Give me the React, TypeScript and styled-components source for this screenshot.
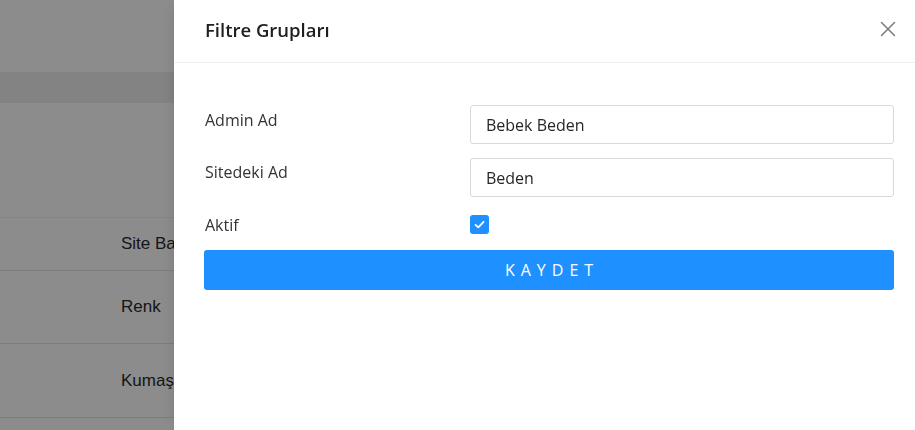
import React from "react";
import styled, { createGlobalStyle } from "styled-components";

const Global = createGlobalStyle`
  html, body { margin: 0; padding: 0; }
  body { width: 915px; height: 430px; overflow: hidden; background: #fff; font-family: "Liberation Sans", Arial, sans-serif; }
  * { box-sizing: border-box; }
`;

const Page = styled.div`
  width: 915px;
  height: 430px;
  display: flex;
  flex-direction: column;
  background: #fff;
`;

const PageHeader = styled.div`
  height: 72px;
  flex: none;
`;

const TableHead = styled.div`
  height: 31px;
  flex: none;
  background: #eeeeee;
`;

const Row = styled.div<{ $h: number; $line?: string }>`
  height: ${(p) => p.$h}px;
  flex: none;
  display: flex;
  align-items: center;
  padding-left: 121px;
  border-bottom: 1px solid ${(p) => p.$line ?? "#e3e3e3"};
  font-size: 17px;
  color: #2a2a2a;
`;

const Overlay = styled.div`
  position: fixed;
  inset: 0;
  background: rgba(0, 0, 0, 0.45);
`;

const Drawer = styled.div`
  position: fixed;
  top: 0;
  right: 0;
  bottom: 0;
  width: 741px;
  background: #fff;
  box-shadow: -6px 0 16px -6px rgba(0, 0, 0, 0.12);
  display: flex;
  flex-direction: column;
  font-family: "Open Sans", "Noto Sans", sans-serif;
`;

const DrawerHeader = styled.div`
  height: 63px;
  flex: none;
  display: flex;
  align-items: center;
  justify-content: space-between;
  padding: 0 19px 0 31px;
  border-bottom: 1px solid #efefef;
`;

const Title = styled.div`
  font-size: 18.5px;
  font-weight: 600;
  color: #1f1f1f;
  margin-top: -4px;
`;

const CloseButton = styled.button`
  border: 0;
  background: none;
  padding: 0;
  width: 16px;
  height: 16px;
  display: flex;
  align-items: center;
  justify-content: center;
  cursor: pointer;
  margin-top: -4px;
`;

const Body = styled.div`
  padding: 42px 21px 0 30px;
  display: flex;
  flex-direction: column;
`;

const FormRow = styled.div<{ $mb: number }>`
  display: grid;
  grid-template-columns: 266px 1fr;
  align-items: start;
  margin-bottom: ${(p) => p.$mb}px;
`;

const Label = styled.label<{ $pt: number }>`
  font-size: 16px;
  color: #333;
  padding-top: ${(p) => p.$pt}px;
  line-height: 22px;
  padding-left: 1px;
`;

const Input = styled.input`
  height: 39px;
  width: 100%;
  border: 1px solid #d9d9d9;
  border-radius: 3px;
  padding: 0 15px;
  font-family: "Open Sans", "Noto Sans", sans-serif;
  font-size: 16px;
  color: #262626;
  outline: none;
  background: #fff;
`;

const Check = styled.span`
  width: 19px;
  height: 19px;
  border-radius: 3px;
  background: #1e90ff;
  display: flex;
  align-items: center;
  justify-content: center;
  margin-top: 1px;
`;

const SaveButton = styled.button`
  height: 40px;
  width: 100%;
  border: 0;
  border-radius: 3px;
  background: #1e90ff;
  color: #fff;
  font-family: "Open Sans", "Noto Sans", sans-serif;
  font-size: 16px;
  letter-spacing: 6px;
  text-indent: 6px;
  cursor: pointer;
`;

export default function App() {
  return (
    <>
      <Global />
      <Page>
        <PageHeader />
        <TableHead />
        <Row $h={115} $line="#f2f2f2" />
        <Row $h={53}>Site Başlığı</Row>
        <Row $h={73}>Renk</Row>
        <Row $h={74}>Kumaş</Row>
      </Page>
      <Overlay />
      <Drawer>
        <DrawerHeader>
          <Title>Filtre Grupları</Title>
          <CloseButton aria-label="Kapat">
            <svg width="16" height="16" viewBox="0 0 16 16">
              <path d="M1.5 1.5 L14.5 14.5 M14.5 1.5 L1.5 14.5" stroke="#7a7a7a" strokeWidth="1.5" strokeLinecap="round" fill="none" />
            </svg>
          </CloseButton>
        </DrawerHeader>
        <Body>
          <FormRow $mb={14}>
            <Label $pt={4}>Admin Ad</Label>
            <Input defaultValue="Bebek Beden" />
          </FormRow>
          <FormRow $mb={17}>
            <Label $pt={3}>Sitedeki Ad</Label>
            <Input defaultValue="Beden" />
          </FormRow>
          <FormRow $mb={14}>
            <Label $pt={0}>Aktif</Label>
            <Check>
              <svg width="13" height="13" viewBox="0 0 13 13">
                <path d="M2.5 6.8 L5.3 9.4 L10.6 3.8" stroke="#fff" strokeWidth="1.8" fill="none" strokeLinecap="round" strokeLinejoin="round" />
              </svg>
            </Check>
          </FormRow>
          <SaveButton>KAYDET</SaveButton>
        </Body>
      </Drawer>
    </>
  );
}
